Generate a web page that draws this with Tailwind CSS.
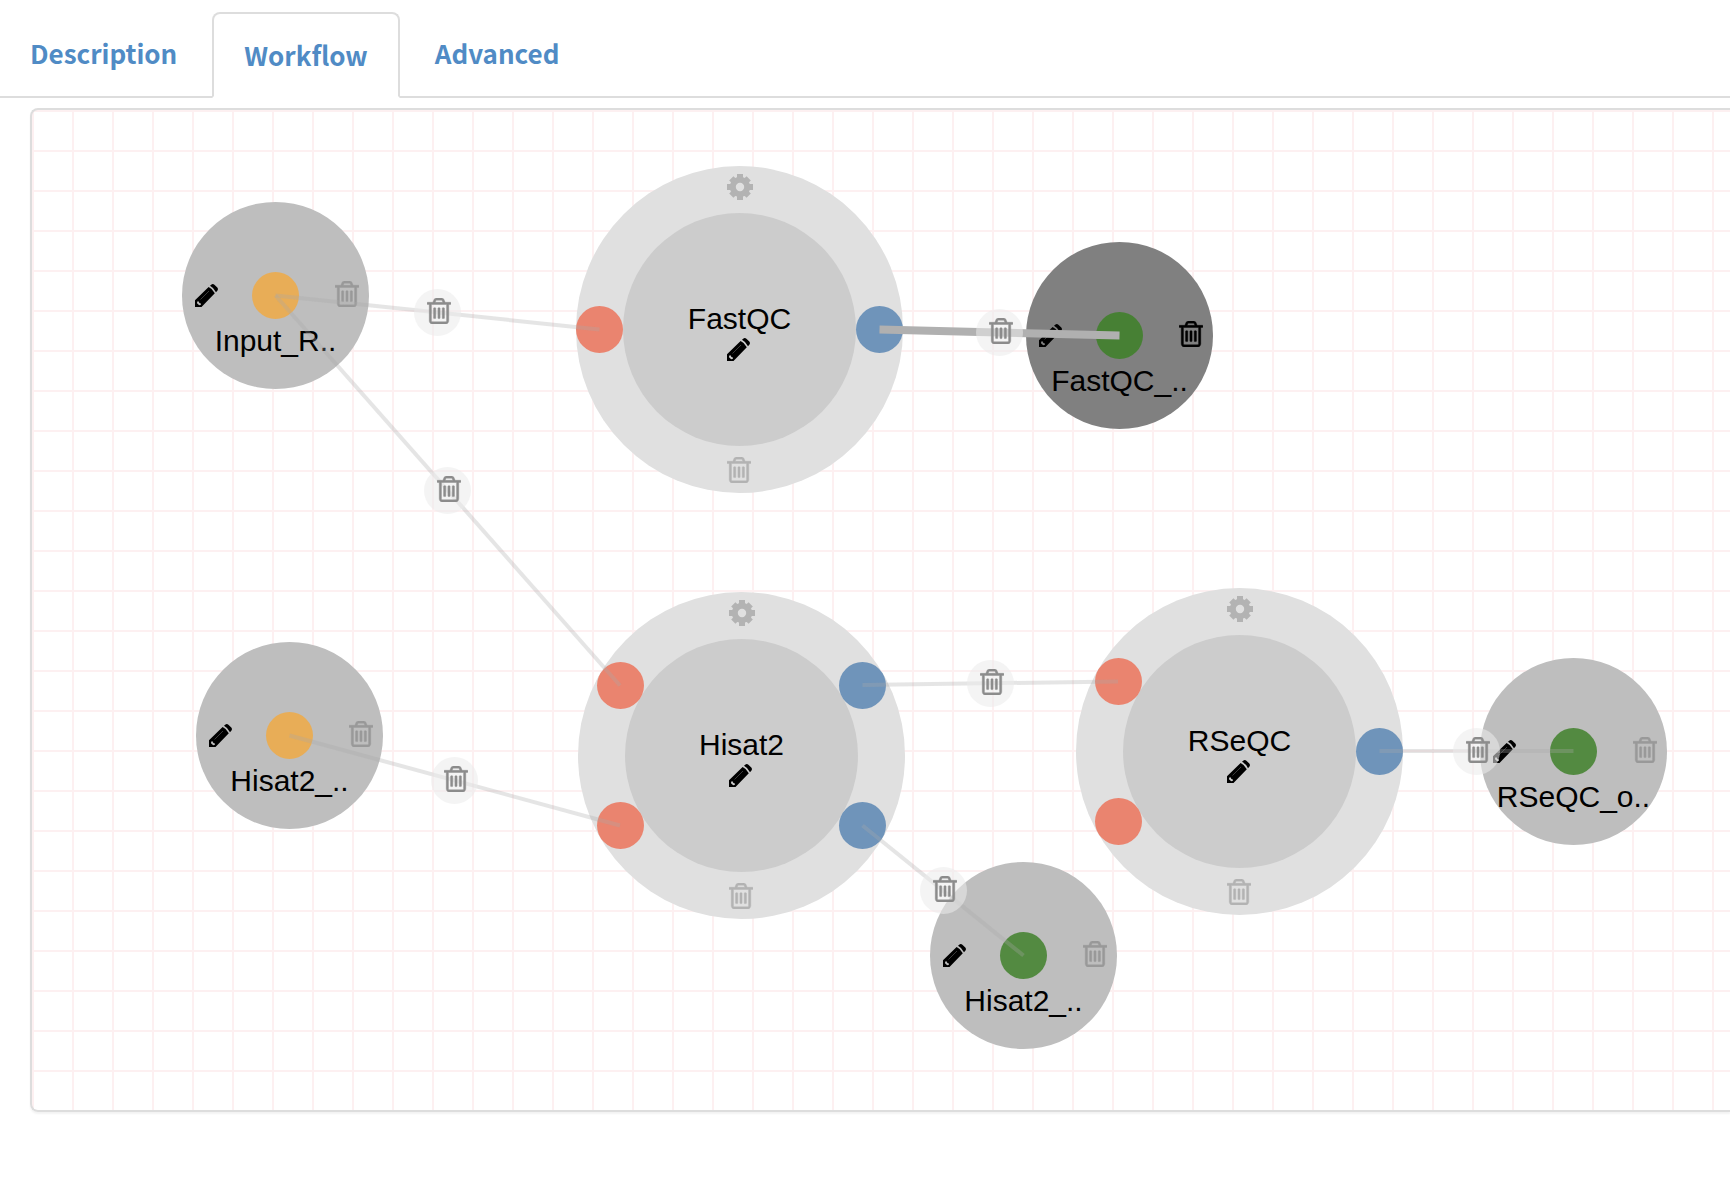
<!DOCTYPE html>
<html lang="en">
<head>
<meta charset="utf-8">
<title>Workflow</title>
<script src="https://cdn.jsdelivr.net/npm/@tailwindcss/browser@4"></script>
</head>
<body class="min-h-screen overflow-x-hidden bg-white font-['Liberation_Sans',Arial,sans-serif] text-black">

<svg class="hidden" aria-hidden="true">
  <symbol id="trash" viewBox="192 128 1408 1536"><path fill="currentColor" stroke="currentColor" stroke-width="26" d="M704 736v576q0 14-9 23t-23 9h-64q-14 0-23-9t-9-23v-576q0-14 9-23t23-9h64q14 0 23 9t9 23zm256 0v576q0 14-9 23t-23 9h-64q-14 0-23-9t-9-23v-576q0-14 9-23t23-9h64q14 0 23 9t9 23zm256 0v576q0 14-9 23t-23 9h-64q-14 0-23-9t-9-23v-576q0-14 9-23t23-9h64q14 0 23 9t9 23zm128 724v-948h-896v948q0 22 7 40.500t14.500 27 10.500 8.500h832q3 0 10.500-8.500t14.500-27 7-40.500zm-672-1076h448l-48-117q-7-9-17-11h-317q-10 2-17 11zm928 32v64q0 14-9 23t-23 9h-96v948q0 83-47 143.500t-113 60.500h-832q-66 0-113-58.500t-47-141.500v-952h-96q-14 0-23-9t-9-23v-64q0-14 9-23t23-9h309l70-167q15-37 54-63t79-26h320q40 0 79 26t54 63l70 167h309q14 0 23 9t9 23z"/></symbol>
  <symbol id="pencil" viewBox="0 0 23 23">
    <path fill="currentColor" fill-rule="evenodd" d="M0 23V16.200L13.600 3Q17.800 4.800 19.800 9.200L6.500 23ZM2.200 17.400L2 19.200 4.200 21.300 6 20.700 5.600 19.300 4.300 19 3.900 17.600Z"/>
    <path fill="currentColor" d="M15 1.800L16.200 .7Q17.800-.6 19.400 .7L22.300 3.600Q23.600 5.200 22.300 6.800L21 8.300Q19.200 4 15 1.800Z"/>
    <path fill="none" stroke="#777" stroke-width=".5" d="M5.500 15.500L14 7"/>
  </symbol>
  <symbol id="gear" viewBox="-13 -13 26 26">
    <g fill="none" stroke="currentColor">
      <circle r="7.200" stroke-width="6"/>
      <path stroke-width="6" d="M0-8V-13M0 8V13M-8 0H-13M8 0H13"/>
      <path stroke-width="6" d="M5.600-5.600L8.700-8.700M5.600 5.600L8.700 8.700M-5.600 5.600L-8.700 8.700M-5.600-5.600L-8.700-8.700"/>
    </g>
  </symbol>
</svg>

<nav class="pt-3 font-['Noto_Sans_CJK_SC',sans-serif] text-[26px] leading-9 font-bold text-[#508bc5]">
  <ul class="flex items-stretch border-b-2 border-[#ddd]">
    <li><a href="#description" class="block px-[30px] py-[23px]">Description</a></li>
    <li class="-mb-[2px] ml-[5px]"><a href="#workflow" aria-current="page" class="block rounded-t-lg border-2 border-[#ddd] border-b-white bg-white px-[30px] py-[23px]">Workflow</a></li>
    <li class="ml-[5px]"><a href="#advanced" class="block px-[30px] py-[23px]">Advanced</a></li>
  </ul>
</nav>

<main class="pt-[10px] pl-[30px]">
  <section aria-label="Workflow diagram" class="relative h-[1004px] rounded-l-lg border-y-2 border-l-2 border-[#ddd] bg-[linear-gradient(to_right,#fdf0f1_2px,transparent_2px),linear-gradient(to_bottom,#fdf0f1_2px,transparent_2px)] bg-[size:40px_40px] shadow-[0_2px_2px_rgba(0,0,0,0.05)]">

    <!-- Process nodes -->
    <div class="absolute top-[56px] left-[544px] size-[327px] rounded-full bg-[#e0e0e0]">
      <div class="absolute top-[47px] left-[47px] size-[233px] rounded-full bg-[#ccc]"></div>
      <button aria-label="Settings" class="absolute top-2 left-[151px] size-[26px] text-[#b3b3b3]"><svg class="size-full"><use href="#gear"/></svg></button>
      <span class="absolute inset-x-0 top-[136px] text-center text-[30px] leading-[34px]">FastQC</span>
      <button aria-label="Rename" class="absolute top-[172px] left-[151px] size-[23px]"><svg class="size-full"><use href="#pencil"/></svg></button>
      <button aria-label="Delete" class="absolute top-[291px] left-[151px] h-[26px] w-6 text-[#b3b3b3]"><svg class="size-full"><use href="#trash"/></svg></button>
      <i class="absolute top-[140px] left-0 size-[47px] rounded-full bg-[#ea846f]"></i>
      <i class="absolute top-[140px] left-[280px] size-[47px] rounded-full bg-[#6f94ba]"></i>
    </div>

    <div class="absolute top-[482px] left-[546px] size-[327px] rounded-full bg-[#e0e0e0]">
      <div class="absolute top-[47px] left-[47px] size-[233px] rounded-full bg-[#ccc]"></div>
      <button aria-label="Settings" class="absolute top-2 left-[151px] size-[26px] text-[#b3b3b3]"><svg class="size-full"><use href="#gear"/></svg></button>
      <span class="absolute inset-x-0 top-[136px] text-center text-[30px] leading-[34px]">Hisat2</span>
      <button aria-label="Rename" class="absolute top-[172px] left-[151px] size-[23px]"><svg class="size-full"><use href="#pencil"/></svg></button>
      <button aria-label="Delete" class="absolute top-[291px] left-[151px] h-[26px] w-6 text-[#b3b3b3]"><svg class="size-full"><use href="#trash"/></svg></button>
      <i class="absolute top-[70px] left-[19px] size-[47px] rounded-full bg-[#ea846f]"></i>
      <i class="absolute top-[210px] left-[19px] size-[47px] rounded-full bg-[#ea846f]"></i>
      <i class="absolute top-[70px] left-[261px] size-[47px] rounded-full bg-[#6f94ba]"></i>
      <i class="absolute top-[210px] left-[261px] size-[47px] rounded-full bg-[#6f94ba]"></i>
    </div>

    <div class="absolute top-[478px] left-[1044px] size-[327px] rounded-full bg-[#e0e0e0]">
      <div class="absolute top-[47px] left-[47px] size-[233px] rounded-full bg-[#ccc]"></div>
      <button aria-label="Settings" class="absolute top-2 left-[151px] size-[26px] text-[#b3b3b3]"><svg class="size-full"><use href="#gear"/></svg></button>
      <span class="absolute inset-x-0 top-[136px] text-center text-[30px] leading-[34px]">RSeQC</span>
      <button aria-label="Rename" class="absolute top-[172px] left-[151px] size-[23px]"><svg class="size-full"><use href="#pencil"/></svg></button>
      <button aria-label="Delete" class="absolute top-[291px] left-[151px] h-[26px] w-6 text-[#b3b3b3]"><svg class="size-full"><use href="#trash"/></svg></button>
      <i class="absolute top-[70px] left-[19px] size-[47px] rounded-full bg-[#ea846f]"></i>
      <i class="absolute top-[210px] left-[19px] size-[47px] rounded-full bg-[#ea846f]"></i>
      <i class="absolute top-[140px] left-[280px] size-[47px] rounded-full bg-[#6f94ba]"></i>
    </div>

    <!-- Input and output nodes -->
    <div class="absolute top-[92px] left-[150px] size-[187px] rounded-full bg-[#bebebe]">
      <button aria-label="Rename" class="absolute top-[82px] left-[13px] size-[23px]"><svg class="size-full"><use href="#pencil"/></svg></button>
      <i class="absolute top-[70px] left-[70px] size-[47px] rounded-full bg-[#e8ad57]"></i>
      <button aria-label="Delete" class="absolute top-[79px] left-[153px] h-[26px] w-6 text-[#999]"><svg class="size-full"><use href="#trash"/></svg></button>
      <span class="absolute inset-x-0 top-[122px] text-center text-[30px] leading-[34px]">Input_R..</span>
    </div>

    <div class="absolute top-[532px] left-[164px] size-[187px] rounded-full bg-[#bebebe]">
      <button aria-label="Rename" class="absolute top-[82px] left-[13px] size-[23px]"><svg class="size-full"><use href="#pencil"/></svg></button>
      <i class="absolute top-[70px] left-[70px] size-[47px] rounded-full bg-[#e8ad57]"></i>
      <button aria-label="Delete" class="absolute top-[79px] left-[153px] h-[26px] w-6 text-[#999]"><svg class="size-full"><use href="#trash"/></svg></button>
      <span class="absolute inset-x-0 top-[122px] text-center text-[30px] leading-[34px]">Hisat2_..</span>
    </div>

    <div class="absolute top-[132px] left-[994px] size-[187px] rounded-full bg-[#808080]">
      <button aria-label="Rename" class="absolute top-[82px] left-[13px] size-[23px]"><svg class="size-full"><use href="#pencil"/></svg></button>
      <i class="absolute top-[70px] left-[70px] size-[47px] rounded-full bg-[#478034]"></i>
      <button aria-label="Delete" class="absolute top-[79px] left-[153px] h-[26px] w-6"><svg class="size-full"><use href="#trash"/></svg></button>
      <span class="absolute inset-x-0 top-[122px] text-center text-[30px] leading-[34px]">FastQC_..</span>
    </div>

    <div class="absolute top-[752px] left-[898px] size-[187px] rounded-full bg-[#bebebe]">
      <button aria-label="Rename" class="absolute top-[82px] left-[13px] size-[23px]"><svg class="size-full"><use href="#pencil"/></svg></button>
      <i class="absolute top-[70px] left-[70px] size-[47px] rounded-full bg-[#538a41]"></i>
      <button aria-label="Delete" class="absolute top-[79px] left-[153px] h-[26px] w-6 text-[#999]"><svg class="size-full"><use href="#trash"/></svg></button>
      <span class="absolute inset-x-0 top-[122px] text-center text-[30px] leading-[34px]">Hisat2_..</span>
    </div>

    <div class="absolute top-[548px] left-[1448px] size-[187px] rounded-full bg-[#bebebe]">
      <button aria-label="Rename" class="absolute top-[82px] left-[13px] size-[23px]"><svg class="size-full"><use href="#pencil"/></svg></button>
      <i class="absolute top-[70px] left-[70px] size-[47px] rounded-full bg-[#538a41]"></i>
      <button aria-label="Delete" class="absolute top-[79px] left-[153px] h-[26px] w-6 text-[#999]"><svg class="size-full"><use href="#trash"/></svg></button>
      <span class="absolute inset-x-0 top-[122px] text-center text-[30px] leading-[34px]">RSeQC_o..</span>
    </div>

    <!-- Connections -->
    <svg class="pointer-events-none absolute inset-0 size-full" fill="none" stroke="#aaa" stroke-width="4">
      <g stroke-opacity=".3">
        <path d="M243.500 185.500L567.500 219.500"/>
        <path d="M243.500 185.500L588 575.500"/>
        <path d="M257.500 625.500L588 715.500"/>
        <path d="M830.500 575L1086 571.500"/>
        <path d="M830.500 715.500L991.500 845.500"/>
        <path d="M1347.500 641H1541.500"/>
      </g>
      <path stroke="#b0b0b0" stroke-width="8" d="M847.500 219.500L1087.500 225.500"/>
    </svg>

    <button aria-label="Delete connection" class="absolute top-[179px] left-[382px] flex size-[47px] items-start rounded-full bg-[#ebebeb]/55 pt-[9px] pl-[13px] text-[#8c8c8c]"><svg class="h-[26px] w-6"><use href="#trash"/></svg></button>
    <button aria-label="Delete connection" class="absolute top-[357px] left-[392px] flex size-[47px] items-start rounded-full bg-[#ebebeb]/55 pt-[9px] pl-[13px] text-[#8c8c8c]"><svg class="h-[26px] w-6"><use href="#trash"/></svg></button>
    <button aria-label="Delete connection" class="absolute top-[647px] left-[399px] flex size-[47px] items-start rounded-full bg-[#ebebeb]/55 pt-[9px] pl-[13px] text-[#8c8c8c]"><svg class="h-[26px] w-6"><use href="#trash"/></svg></button>
    <button aria-label="Delete connection" class="absolute top-[550px] left-[935px] flex size-[47px] items-start rounded-full bg-[#ebebeb]/55 pt-[9px] pl-[13px] text-[#8c8c8c]"><svg class="h-[26px] w-6"><use href="#trash"/></svg></button>
    <button aria-label="Delete connection" class="absolute top-[757px] left-[888px] flex size-[47px] items-start rounded-full bg-[#ebebeb]/55 pt-[9px] pl-[13px] text-[#8c8c8c]"><svg class="h-[26px] w-6"><use href="#trash"/></svg></button>
    <button aria-label="Delete connection" class="absolute top-[618px] left-[1421px] flex size-[47px] items-start rounded-full bg-[#ebebeb]/55 pt-[9px] pl-[13px] text-[#8c8c8c]"><svg class="h-[26px] w-6"><use href="#trash"/></svg></button>
    <button aria-label="Delete connection" class="absolute top-[199px] left-[944px] flex size-[47px] items-start rounded-full bg-[#ebebeb]/55 pt-[9px] pl-[13px] text-[#8c8c8c]"><svg class="h-[26px] w-6"><use href="#trash"/></svg></button>
  </section>
</main>
</body>
</html>
